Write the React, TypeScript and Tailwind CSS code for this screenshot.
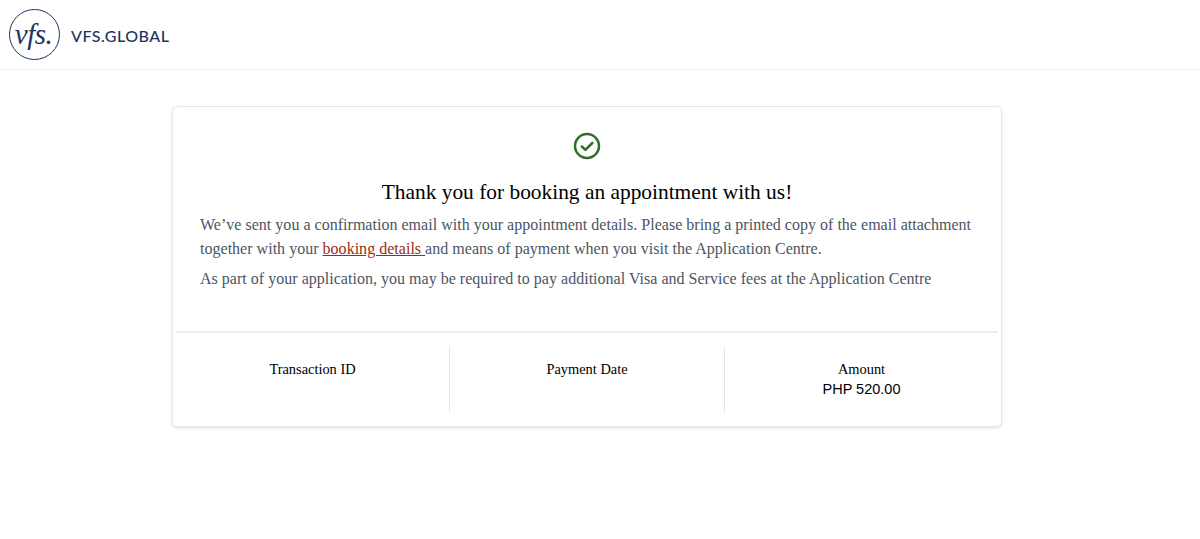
export default function App() {
  const serif = { fontFamily: '"Liberation Serif", serif' };
  return (
    <div className="min-h-[539px] bg-white" style={serif}>
      <header className="flex h-[70px] items-center border-b border-[#f0f0f0] pl-[9px]">
        <div className="flex h-[51px] w-[51px] items-center justify-center rounded-full border-[1.5px] border-[#1d3461] pr-0.5">
          <span className="text-[29px] italic leading-none tracking-[-0.5px] text-[#1d3461]">vfs.</span>
        </div>
        <span className="ml-[11px] pt-[2px] font-['Lato',sans-serif] text-[16px] font-medium tracking-[0.5px] text-[#1d3461]">VFS.GLOBAL</span>
      </header>
      <main className="flex justify-center pr-[26px] pt-9">
        <div className="h-[321px] w-[830px] rounded-[5px] border border-[#e5e7eb] bg-white px-[3px] shadow-[0_1px_3px_rgba(0,0,0,0.12)]">
          <div className="flex h-[226px] flex-col border-b-2 border-[#ececec] px-6 pt-[25px]">
            <svg className="mx-auto shrink-0" width="28" height="28" viewBox="0 0 28 28" fill="none" stroke="#2e6f2a" strokeWidth="2.5" strokeLinecap="round" strokeLinejoin="round">
              <circle cx="14" cy="14" r="12" />
              <path d="M8.8 14.5l3.6 3.4L19.3 11" />
            </svg>
            <h1 className="mt-[18px] text-center text-[21.4px] leading-[28px] text-black">Thank you for booking an appointment with us!</h1>
            <p className="mt-[7px] text-[16px] leading-[24px] tracking-[0.02px] text-[#4b5563]">
              We’ve sent you a confirmation email with your appointment details. Please bring a printed copy of the email attachment together with your <a className="text-[#9a2c12] underline">booking details </a>and means of payment when you visit the Application Centre.
            </p>
            <p className="mt-[6px] text-[16px] leading-[24px] tracking-[0.02px] text-[#4b5563]">
              As part of your application, you may be required to pay additional Visa and Service fees at the Application Centre
            </p>
          </div>
          <div className="grid grid-cols-[274px_275px_1fr] pt-[13px] text-center text-[14.4px] text-black">
            <div className="h-[67px] border-r border-[#e5e7eb] pt-[14px] leading-[18px]">Transaction ID</div>
            <div className="h-[67px] border-r border-[#e5e7eb] pt-[14px] leading-[18px]">Payment Date</div>
            <div className="h-[67px] pt-[14px] leading-[18px]">
              Amount
              <div className="mt-[1px] font-['Liberation_Sans',sans-serif] text-[14.5px] leading-[20px]">PHP 520.00</div>
            </div>
          </div>
        </div>
      </main>
    </div>
  );
}
